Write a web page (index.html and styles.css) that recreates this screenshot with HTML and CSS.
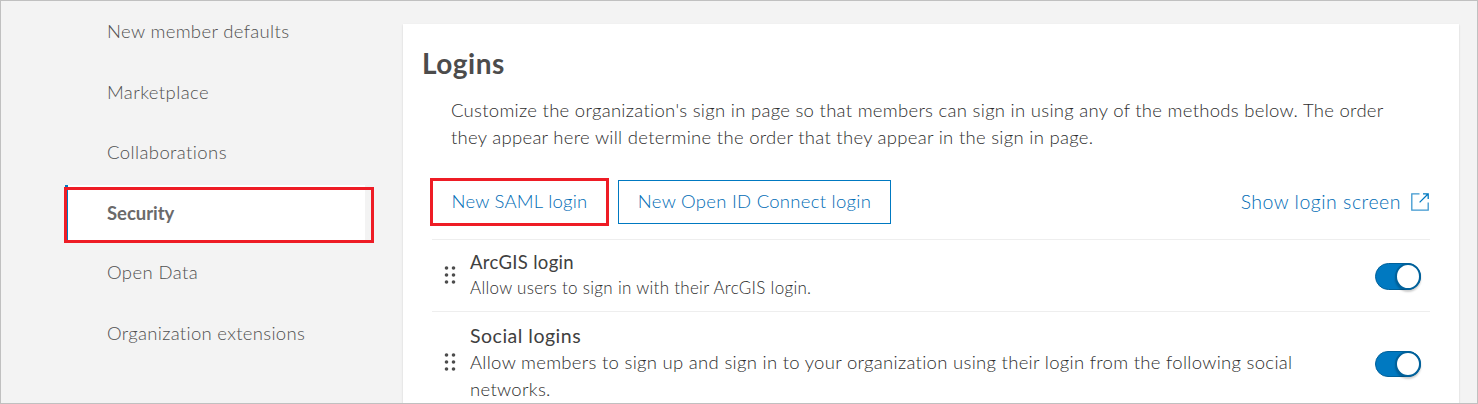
FILE: index.html
```html
<!DOCTYPE html>
<html lang="en">
<head>
<meta charset="utf-8">
<title>Organization settings</title>
<link rel="stylesheet" href="styles.css">
</head>
<body>
<div class="page">
  <nav class="side">
    <a class="side-item"><span class="t-member">New member defaults</span></a>
    <a class="side-item low"><span class="t-market">Marketplace</span></a>
    <a class="side-item"><span class="t-collab">Collaborations</span></a>
    <a class="side-item selected"><span class="t-security">Security</span><i class="mark mark-nav"></i></a>
    <a class="side-item"><span class="t-open">Open Data</span></a>
    <a class="side-item low"><span class="t-ext">Organization extensions</span></a>
  </nav>
  <main class="card">
    <h2 class="title"><span class="t-title">Logins</span></h2>
    <p class="intro"><span class="t-intro">Customize the organization's sign in page so that members can sign in using any of the methods below. The order</span><br><span class="t-intro">they appear here will determine the order that they appear in the sign in page.</span></p>
    <div class="actions">
      <button class="btn btn-saml"><span class="t-saml">New SAML login</span></button>
      <button class="btn btn-oidc"><span class="t-oidc">New Open ID Connect login</span></button>
      <a class="show"><span class="t-show">Show login screen</span>
        <svg class="launch" width="18" height="18" viewBox="0 0 18 18" fill="none" stroke="#3c97cf" stroke-width="1.3"><path d="M8.5.8H.8v16.4h16.4V9.5"/><path d="M12 .8h5.2V6M17 1 8.6 9.4" stroke="#0079c1"/></svg>
      </a>
    </div>
    <section class="row row-arcgis">
      <svg class="grip" width="12" height="20" viewBox="0 0 12 20" fill="#4c4c4c"><circle cx="2.5" cy="3" r="1.8"/><circle cx="9.5" cy="3" r="1.8"/><circle cx="2.5" cy="10" r="1.8"/><circle cx="9.5" cy="10" r="1.8"/><circle cx="2.5" cy="17" r="1.8"/><circle cx="9.5" cy="17" r="1.8"/></svg>
      <div class="text">
        <h3 class="name"><span class="t-arcgis">ArcGIS login</span></h3>
        <p class="desc desc-small"><span class="t-allow">Allow users to sign in with their ArcGIS login.</span></p>
      </div>
      <span class="switch"><i class="knob"></i></span>
    </section>
    <section class="row row-social">
      <svg class="grip" width="12" height="20" viewBox="0 0 12 20" fill="#4c4c4c"><circle cx="2.5" cy="3" r="1.8"/><circle cx="9.5" cy="3" r="1.8"/><circle cx="2.5" cy="10" r="1.8"/><circle cx="9.5" cy="10" r="1.8"/><circle cx="2.5" cy="17" r="1.8"/><circle cx="9.5" cy="17" r="1.8"/></svg>
      <div class="text">
        <h3 class="name"><span class="t-social">Social logins</span></h3>
        <p class="desc"><span class="t-allow">Allow members to sign up and sign in to your organization using their login from the following social</span><br><span class="t-allow">networks.</span></p>
      </div>
      <span class="switch"><i class="knob"></i></span>
    </section>
  </main>
</div>
</body>
</html>
```
FILE: styles.css
```css
* { box-sizing: border-box; margin: 0; }
body { font-family: Lato, "Open Sans", sans-serif; font-weight: 300; font-size: 18.5px; color: #2e2e2e; }
.page { display: flex; width: 1478px; height: 404px; overflow: hidden; border: 1px solid #c0c0c0; background: #f3f3f3; }
.side { display: flex; flex-direction: column; gap: 3.3px; width: 300px; margin: 3px 38px 0 64px; flex: none; }
.side-item { display: flex; align-items: center; height: 57px; padding: 0 0 3px 42px; flex: none; color: #505050; white-space: nowrap; }
.low { padding-bottom: 1px; }
.selected { position: relative; padding: 0 0 1px 39px; border-left: 3px solid #0079c1; background: #fff; font-weight: 700; color: #6a6a6a; }
.mark { position: absolute; border: 3px solid #ee1c25; }
.mark-nav { left: -4px; top: 2px; width: 310px; height: 56px; }
.card { width: 1056px; height: 400px; margin-top: 23px; padding: 0 29px 0 30px; flex: none; background: #fff; box-shadow: 0 1px 2px rgba(0,0,0,.14); white-space: nowrap; }
.title { margin-left: -11px; padding-top: 22px; font-size: 28px; line-height: 34px; font-weight: 700; color: #4c4c4c; }
.intro { margin: 17px 0 0 18px; line-height: 27px; }
.actions { display: flex; align-items: center; height: 54px; margin: 24px 0 0 -3px; }
.btn { display: flex; align-items: center; justify-content: center; font: inherit; color: #006cb5; background: #fff; padding: 0 0 2px; }
.btn-saml { width: 179px; height: 48px; border: 3px solid #ee1c25; }
.btn-oidc { width: 273px; height: 44px; margin-left: 9px; border: 1px solid #0079c1; }
.show { display: flex; align-items: center; gap: 10px; margin: 0 1px 0 auto; color: #006cb5; font-size: 19.5px; }
.show span { padding-bottom: 2px; }
.row { display: flex; align-items: center; margin-left: -1px; border-top: 1px solid #eee; }
.row-arcgis { height: 72px; margin-top: 10px; }
.row-social { height: 103px; }
.grip { margin-left: 12px; flex: none; position: relative; top: -1px; }
.text { margin-left: 14px; }
.row-social .text { padding-bottom: 2px; }
.name { font-size: 18.5px; line-height: 27px; font-weight: 400; color: #404040; }
.row-social .name { font-size: 19.5px; }
.desc { line-height: 27px; }
.desc-small { font-size: 17px; line-height: 24px; padding-bottom: 2px; }
.switch { display: block; position: relative; width: 46px; height: 27px; margin: 1px 9px 0 auto; flex: none; border-radius: 14px; border: 1px solid #00619b; background: #0079c1; }
.row-social .switch { height: 26px; }
.knob { position: absolute; right: -1px; top: -1px; width: 26px; height: 27px; border-radius: 50%; border: 2px solid #00619b; background: #fff; box-shadow: 0 2px 2px rgba(0,0,0,.2); }
.row-social .knob { height: 26px; }
.t-member { letter-spacing: .34px; }
.t-market, .t-collab, .t-open { letter-spacing: .4px; }
.t-security { letter-spacing: -.05px; }
.t-ext { letter-spacing: .31px; }
.t-title { letter-spacing: .5px; }
.t-intro { letter-spacing: .285px; }
.t-saml { letter-spacing: .24px; }
.t-oidc { letter-spacing: .28px; }
.t-show { letter-spacing: .5px; }
.t-arcgis { letter-spacing: .32px; }
.t-allow { letter-spacing: .295px; }
.t-social { letter-spacing: .5px; }
```
